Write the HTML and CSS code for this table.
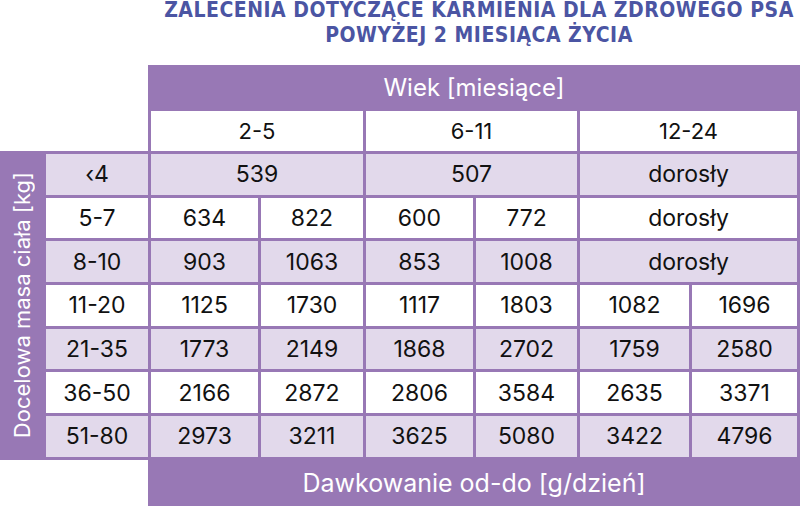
FILE: index.html
```html
<!DOCTYPE html>
<html lang="pl">
<head>
<meta charset="utf-8">
<link rel="stylesheet" href="styles.css">
</head>
<body>
<div class="page">
  <div class="title">ZALECENIA DOTYCZĄCE KARMIENIA DLA ZDROWEGO PSA<br>POWYŻEJ 2 MIESIĄCA ŻYCIA</div>
  <div class="table">
    <div class="corner-top"></div>
    <div class="band">Wiek [miesiące]</div>
    <div class="cell age span2">2-5</div>
    <div class="cell age span2">6-11</div>
    <div class="cell age span2">12-24</div>
    <div class="strip"><span class="strip-text">Docelowa masa ciała [kg]</span></div>

    <div class="cell alt">‹4</div>
    <div class="cell alt span2">539</div>
    <div class="cell alt span2">507</div>
    <div class="cell alt span2">dorosły</div>

    <div class="cell">5-7</div>
    <div class="cell">634</div>
    <div class="cell">822</div>
    <div class="cell">600</div>
    <div class="cell">772</div>
    <div class="cell span2">dorosły</div>

    <div class="cell alt">8-10</div>
    <div class="cell alt">903</div>
    <div class="cell alt">1063</div>
    <div class="cell alt">853</div>
    <div class="cell alt">1008</div>
    <div class="cell alt span2">dorosły</div>

    <div class="cell">11-20</div>
    <div class="cell">1125</div>
    <div class="cell">1730</div>
    <div class="cell">1117</div>
    <div class="cell">1803</div>
    <div class="cell">1082</div>
    <div class="cell">1696</div>

    <div class="cell alt">21-35</div>
    <div class="cell alt">1773</div>
    <div class="cell alt">2149</div>
    <div class="cell alt">1868</div>
    <div class="cell alt">2702</div>
    <div class="cell alt">1759</div>
    <div class="cell alt">2580</div>

    <div class="cell">36-50</div>
    <div class="cell">2166</div>
    <div class="cell">2872</div>
    <div class="cell">2806</div>
    <div class="cell">3584</div>
    <div class="cell">2635</div>
    <div class="cell">3371</div>

    <div class="cell alt">51-80</div>
    <div class="cell alt">2973</div>
    <div class="cell alt">3211</div>
    <div class="cell alt">3625</div>
    <div class="cell alt">5080</div>
    <div class="cell alt">3422</div>
    <div class="cell alt">4796</div>

    <div class="corner-bottom"></div>
    <div class="foot">Dawkowanie od-do [g/dzień]</div>
  </div>
</div>
</body>
</html>
```
FILE: styles.css
```css
html, body {
  margin: 0;
  padding: 0;
  background: #ffffff;
}
.page {
  width: 800px;
  height: 506px;
  overflow: hidden;
  font-family: Inter, "Noto Sans", sans-serif;
}
.title {
  margin-top: -2px;
  padding-left: 158px;
  text-align: center;
  font-family: "DejaVu Sans", sans-serif;
  font-stretch: condensed;
  font-weight: bold;
  font-size: 21px;
  letter-spacing: 0.5px;
  line-height: 25px;
  color: #4b55a3;
  white-space: nowrap;
}
.table {
  margin-top: 17px;
  display: grid;
  grid-template-columns: 43px 102px 107px 102px 107px 101px 109px 105px;
  grid-template-rows: 43px 40px repeat(7, 40.7px) 46px;
  gap: 3px;
  padding-right: 3px;
  background: #9878b5;
}
.corner-top {
  grid-column: 1 / 3;
  grid-row: 1 / 3;
  background: #ffffff;
}
.corner-bottom {
  grid-column: 1 / 3;
  grid-row: 10;
  background: #ffffff;
}
.band {
  grid-column: 3 / 9;
  grid-row: 1;
  display: flex;
  align-items: center;
  justify-content: center;
  color: #ffffff;
  font-size: 24px;
  padding-top: 2px;
}
.foot {
  grid-column: 3 / 9;
  grid-row: 10;
  display: flex;
  align-items: center;
  justify-content: center;
  color: #ffffff;
  font-size: 25px;
}
.strip {
  grid-column: 1;
  grid-row: 3 / 10;
  display: flex;
  align-items: center;
  justify-content: center;
}
.strip-text {
  writing-mode: vertical-rl;
  transform: rotate(180deg);
  color: #ffffff;
  font-size: 22px;
  white-space: nowrap;
}
.cell {
  display: flex;
  align-items: center;
  justify-content: center;
  background: #ffffff;
  color: #111111;
  font-size: 23px;
}
.cell.alt {
  background: #e2d9eb;
}
.cell.age {
  font-size: 22px;
}
.span2 {
  grid-column: span 2;
}
```
